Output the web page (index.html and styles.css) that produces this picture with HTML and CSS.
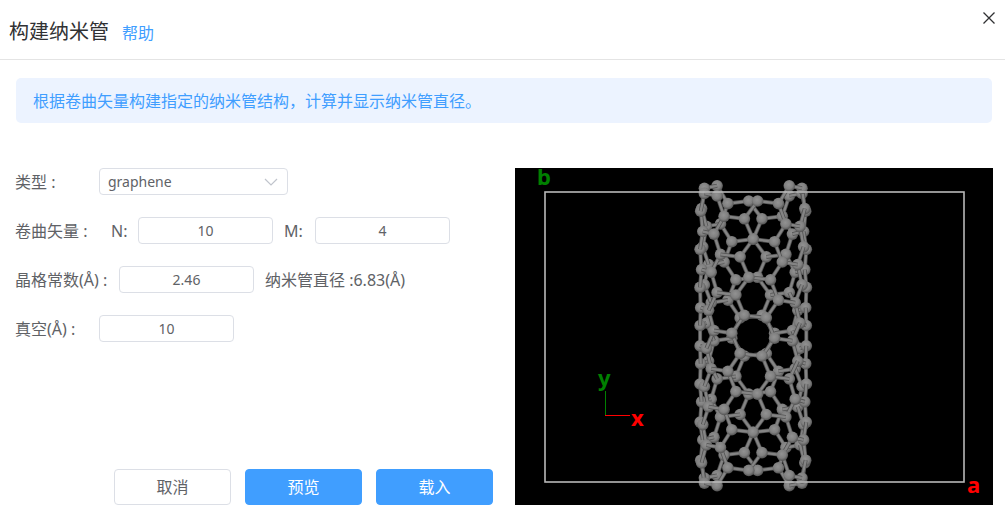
FILE: index.html
```html
<!DOCTYPE html>
<html lang="zh-CN">
<head>
<meta charset="utf-8">
<title>构建纳米管</title>
<link rel="stylesheet" href="styles.css">
</head>
<body>
<main class="dialog">
  <header class="dialog-header">
    <h1 class="title">构建纳米管</h1>
    <a class="help" href="#help">帮助</a>
    <button class="close" type="button" aria-label="关闭">
      <svg viewBox="0 0 14 14" width="14" height="14"><path d="M1.500 1.500l11 11M12.500 1.500l-11 11"/></svg>
    </button>
  </header>
  <p class="notice">根据卷曲矢量构建指定的纳米管结构，计算并显示纳米管直径。</p>
  <div class="content">
    <form class="form">
      <div class="row">
        <label class="label" for="type">类型 :</label>
        <span class="select-box">
          <select class="field select" id="type"><option>graphene</option></select>
          <svg class="chevron" viewBox="0 0 14 8" width="14" height="8"><path d="M1 1l6 6 6-6"/></svg>
        </span>
      </div>
      <div class="row">
        <span class="label label-vector">卷曲矢量 :</span>
        <label class="axis" for="n">N:</label>
        <input class="field number" id="n" value="10">
        <label class="axis axis-m" for="m">M:</label>
        <input class="field number" id="m" value="4">
      </div>
      <div class="row">
        <label class="label label-lattice" for="lattice">晶格常数(Å) :</label>
        <input class="field number" id="lattice" value="2.46">
        <span class="diameter">纳米管直径 :6.83(Å)</span>
      </div>
      <div class="row">
        <label class="label" for="vacuum">真空(Å) :</label>
        <input class="field number" id="vacuum" value="10">
      </div>
      <div class="actions">
        <button class="button" type="button">取消</button>
        <button class="button primary" type="button">预览</button>
        <button class="button primary" type="button">载入</button>
      </div>
    </form>
    <svg class="viewer" viewBox="0 0 478 337" role="img" aria-label="纳米管结构">
      <defs>
        <radialGradient id="atom" cx="0.45" cy="0.4" r="0.6">
          <stop offset="0" stop-color="#929292"/>
          <stop offset="0.6" stop-color="#808080"/>
          <stop offset="1" stop-color="#525252"/>
        </radialGradient>
      </defs>
      <g id="tube"></g>
      <rect class="cell" x="30" y="24" width="419" height="290"/>
      <path class="axis-y" d="M90.500 223v24"/>
      <path class="axis-x" d="M90 247.500h25"/>
      <text class="mark green" x="22" y="17">b</text>
      <text class="mark green" x="83" y="218">y</text>
      <text class="mark red" x="116" y="258">x</text>
      <text class="mark red" x="452" y="325">a</text>
    </svg>
  </div>
</main>
<script src="tube.js"></script>
</body>
</html>
```
FILE: styles.css
```css
* { box-sizing: border-box; }
body {
  margin: 0;
  background: #fff;
  color: #606266;
  font: 16px/24px "Noto Sans", "Noto Sans CJK SC", sans-serif;
}
.dialog { min-height: 100vh; }
.dialog-header {
  display: flex;
  align-items: baseline;
  gap: 13px;
  height: 60px;
  padding: 17px 9px 0;
  border-bottom: 1px solid #e4e4e4;
}
.title {
  margin: 0;
  color: #303133;
  font: 400 20px/30px "Noto Sans", "Noto Sans CJK SC", sans-serif;
}
.help { color: #409eff; text-decoration: none; }
.close {
  align-self: flex-start;
  display: flex;
  margin: -6px 0 0 auto;
  padding: 0;
  border: 0;
  background: none;
}
.close path { fill: none; stroke: #303133; stroke-width: 1.3; }
.notice {
  margin: 18px 13px 0 16px;
  padding: 11px 17px 10px;
  border-radius: 5px;
  background: #ecf3ff;
  color: #409eff;
}
.content {
  display: grid;
  grid-template-columns: 1fr 1fr;
  gap: 22px;
  padding: 45px 12px 14px 15px;
}
.form { display: flex; flex-direction: column; gap: 22px; }
.row { display: flex; align-items: center; height: 27px; white-space: nowrap; }
.label { width: 84px; }
.label-vector { width: 96px; }
.label-lattice { width: 104px; }
.axis { width: 27px; }
.axis-m { width: 31px; margin-left: 11px; }
.diameter { margin-left: 11px; }
.field {
  height: 27px;
  padding: 0 8px;
  border: 1px solid #dcdfe6;
  border-radius: 4px;
  background: #fff;
  color: #606266;
  font: 14px/20px "Noto Sans", sans-serif;
}
.number { width: 135px; text-align: center; }
.select-box { display: grid; align-items: center; width: 189px; }
.select { grid-area: 1 / 1; width: 100%; appearance: none; }
.chevron { grid-area: 1 / 1; justify-self: end; margin-right: 10px; pointer-events: none; }
.chevron path { fill: none; stroke: #c0c4cc; stroke-width: 1.2; }
.actions { display: flex; justify-content: flex-end; gap: 14px; margin-top: auto; }
.button {
  width: 117px;
  height: 36px;
  padding: 0;
  border: 1px solid #dcdfe6;
  border-radius: 4px;
  background: #fff;
  color: #606266;
  font: 16px/24px "Noto Sans", "Noto Sans CJK SC", sans-serif;
}
.primary { border-color: #409eff; background: #409eff; color: #fff; }
.viewer { display: block; width: 100%; overflow: visible; background: #000; }
.bond-edge { stroke: #525252; stroke-width: 4; }
.bond { stroke: #848484; stroke-width: 2.4; }
.cell { fill: none; stroke: #b8b8b8; stroke-width: 1.6; }
.axis-y { stroke: #008000; }
.axis-x { stroke: #f00; }
.mark { font: 700 22px "Noto Sans", sans-serif; }
.green { fill: #008000; }
.red { fill: #f00; }
```
FILE: tube.js
```js
// Rolls a (6,4) carbon sheet into one period of a nanotube.
const BOND = 1.42;
const LATTICE = BOND * Math.sqrt(3);
const RADIUS = LATTICE * Math.sqrt(76) / (2 * Math.PI);
const TILT = Math.atan(Math.sqrt(3) * 4 / 16);
const SCALE = 15.6;
const CENTER = { x: 238.2, y: 167.7 };
const LIMIT = 9.7;
const EPSILON = 0.001;

const polar = (r, a) => [r * Math.cos(a), r * Math.sin(a)];
const a1 = polar(LATTICE, -TILT);
const a2 = polar(LATTICE, Math.PI / 3 - TILT);
const corner = polar(BOND, Math.PI / 6 - TILT);
const half = Math.PI * RADIUS - EPSILON;

const atoms = [];
for (let i = -20; i <= 20; i++) {
  for (let j = -20; j <= 20; j++) {
    for (const sign of [1, -1]) {
      const s = i * a1[0] + j * a2[0] + sign * corner[0];
      const y = i * a1[1] + j * a2[1] + sign * corner[1];
      if (Math.abs(y) > LIMIT || s < -half || s >= half + 2 * EPSILON) continue;
      atoms.push({ x: RADIUS * Math.sin(s / RADIUS), y, z: RADIUS * Math.cos(s / RADIUS) });
    }
  }
}

const px = p => (CENTER.x + p.x * SCALE).toFixed(1);
const py = p => (CENTER.y + p.y * SCALE).toFixed(1);
const parts = atoms.map(p => ({
  z: p.z + 0.3,
  svg: `<circle cx="${px(p)}" cy="${py(p)}" r="5.800" fill="url(#atom)"/>`
}));
atoms.forEach((p, i) => atoms.slice(i + 1).forEach(q => {
  if (Math.hypot(p.x - q.x, p.y - q.y, p.z - q.z) > 1.6) return;
  const ends = `x1="${px(p)}" y1="${py(p)}" x2="${px(q)}" y2="${py(q)}"`;
  parts.push({
    z: (p.z + q.z) / 2,
    svg: `<line class="bond-edge" ${ends}/><line class="bond" ${ends}/>`
  });
}));
parts.sort((a, b) => a.z - b.z);
document.getElementById('tube').innerHTML = parts.map(p => p.svg).join('');
```
